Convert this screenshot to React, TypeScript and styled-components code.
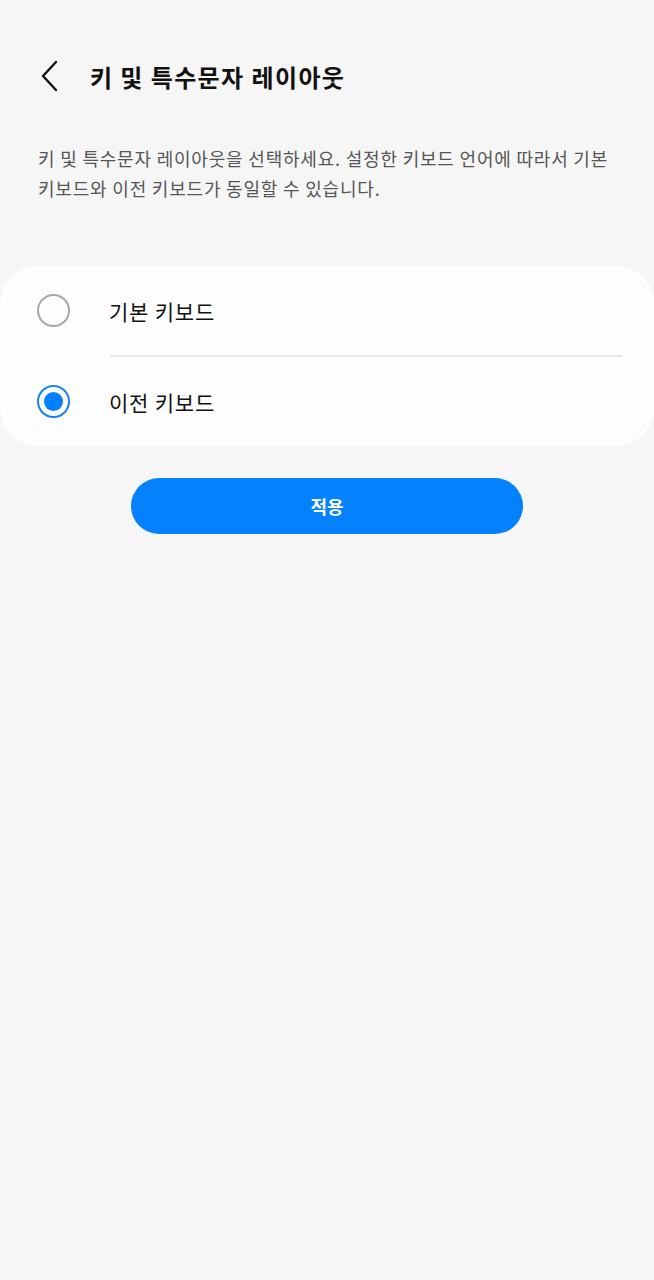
import React from 'react'
import styled, { createGlobalStyle } from 'styled-components'

const GlobalStyle = createGlobalStyle`
  html, body {
    margin: 0;
    padding: 0;
    background: #f6f6f6;
  }
  body {
    font-family: "Noto Sans CJK KR", "Noto Sans", sans-serif;
    color: #000;
  }
`

const Page = styled.div`
  min-height: 1280px;
  background: #f6f6f6;
`

const Header = styled.div`
  display: flex;
  align-items: center;
  height: 76px;
  padding: 38px 0 0 36px;
`

const BackButton = styled.button`
  width: 28px;
  height: 36px;
  padding: 0;
  border: 0;
  background: none;
  display: flex;
  align-items: center;
  justify-content: center;
`

const Title = styled.h1`
  margin: 0 0 0 26px;
  font-size: 24px;
  font-weight: 700;
  letter-spacing: 1.4px;
  color: #111;
`

const Description = styled.p`
  margin: 29px 30px 0 38px;
  font-size: 18px;
  line-height: 30px;
  color: #555;
  letter-spacing: 0.8px;
`

const Card = styled.div`
  margin-top: 63px;
  background: #fdfdfd;
  border-radius: 38px;
`

const Row = styled.label`
  display: flex;
  align-items: center;
  height: 89px;
  padding-left: 37px;
  cursor: pointer;
`

const Divider = styled.div`
  height: 2px;
  margin: 0 32px 0 110px;
  background: #e8e8e8;
`

const Radio = styled.span<{ $checked?: boolean }>`
  box-sizing: border-box;
  width: 33px;
  height: 33px;
  border-radius: 50%;
  border: 2px solid ${p => (p.$checked ? '#1882f5' : '#a8a8a8')};
  display: flex;
  align-items: center;
  justify-content: center;
  &::after {
    content: '';
    width: 19px;
    height: 19px;
    border-radius: 50%;
    background: ${p => (p.$checked ? '#0381fe' : 'transparent')};
  }
`

const Label = styled.span`
  margin-left: 39px;
  font-size: 21px;
  color: #111;
  letter-spacing: 0.8px;
`

const Actions = styled.div`
  display: flex;
  justify-content: center;
  padding-top: 32px;
`

const ApplyButton = styled.button`
  width: 392px;
  height: 56px;
  border: 0;
  border-radius: 28px;
  background: #0381fe;
  color: #fff;
  font-family: "Noto Sans CJK KR", "Noto Sans", sans-serif;
  font-size: 18px;
  font-weight: 700;
`

const options = ['기본 키보드', '이전 키보드']

export default function App() {
  const selected = 1
  return (
    <Page>
      <GlobalStyle />
      <Header>
        <BackButton aria-label="뒤로">
          <svg width="20" height="32" viewBox="0 0 20 32">
            <path d="M16 2 L3 16 L16 30" fill="none" stroke="#111" strokeWidth="2.4" strokeLinecap="round" strokeLinejoin="round" />
          </svg>
        </BackButton>
        <Title>키 및 특수문자 레이아웃</Title>
      </Header>
      <Description>
        키 및 특수문자 레이아웃을 선택하세요. 설정한 키보드 언어에 따라서 기본 키보드와 이전 키보드가 동일할 수 있습니다.
      </Description>
      <Card>
        {options.map((o, i) => (
          <React.Fragment key={o}>
            {i > 0 && <Divider />}
            <Row>
              <Radio $checked={i === selected} />
              <Label>{o}</Label>
            </Row>
          </React.Fragment>
        ))}
      </Card>
      <Actions>
        <ApplyButton>적용</ApplyButton>
      </Actions>
    </Page>
  )
}
